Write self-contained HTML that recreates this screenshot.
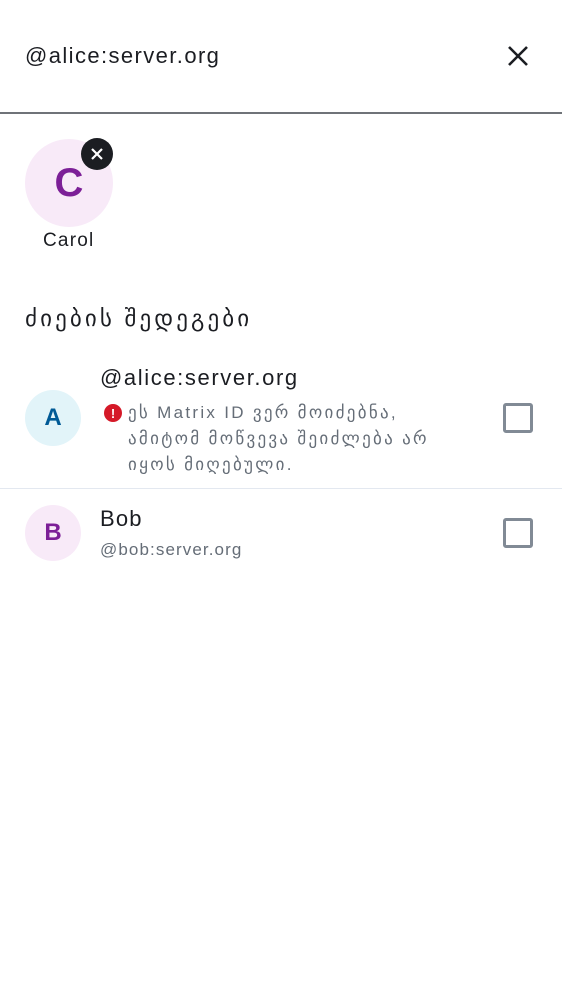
<!DOCTYPE html>
<html><head><meta charset="utf-8"><style>
body{margin:0;width:562px;height:1000px;background:#fff;font-family:"Liberation Sans","DejaVu Sans",sans-serif;color:#1b1d22;position:relative;overflow:hidden}
.a{position:absolute;white-space:nowrap}
.cb{position:absolute;width:24px;height:24px;border:3px solid #818a95;border-radius:3px;left:503px}
.av{position:absolute;border-radius:50%;display:flex;align-items:center;justify-content:center;font-weight:bold}
</style></head><body>
<div class="a" style="left:25px;top:43px;font-size:22px;letter-spacing:1.4px">@alice:server.org</div>
<svg class="a" style="left:507px;top:45px" width="22" height="22" viewBox="0 0 22 22"><path d="M2 2L20 20M20 2L2 20" stroke="#1b1d22" stroke-width="2.6"/></svg>
<div class="a" style="left:0;top:112px;width:562px;height:1.5px;background:#6f7378"></div>
<div class="av" style="left:25px;top:139px;width:88px;height:88px;background:#f8eaf8;color:#7c1f97;font-size:40px">C</div>
<div class="av" style="left:81px;top:138px;width:32px;height:32px;background:#1b1d22"><svg width="14" height="14" viewBox="0 0 14 14"><path d="M2 2L12 12M12 2L2 12" stroke="#fff" stroke-width="2.2"/></svg></div>
<div class="a" style="left:43px;top:230px;font-size:19px;letter-spacing:1.2px;color:#1b1d22">Carol</div>
<div class="a" style="left:25px;top:305px;font-size:23px;letter-spacing:3.1px">ძიების შედეგები</div>
<div class="av" style="left:25px;top:390px;width:56px;height:56px;background:#e2f4f9;color:#005a96;font-size:24px">A</div>
<div class="a" style="left:100px;top:365px;font-size:22px;font-weight:500;letter-spacing:1.6px">@alice:server.org</div>
<div class="av" style="left:104px;top:404px;width:18px;height:18px;background:#d51928;color:#fff;font-size:13px">!</div>
<div class="a" style="left:128px;top:400px;font-size:17px;line-height:26px;letter-spacing:2.3px;color:#656d77">ეს Matrix ID ვერ მოიძებნა,<br>ამიტომ მოწვევა შეიძლება არ<br>იყოს მიღებული.</div>
<div class="cb" style="top:403px"></div>
<div class="a" style="left:0;top:488px;width:562px;height:1px;background:#e3e8f0"></div>
<div class="av" style="left:25px;top:505px;width:56px;height:56px;background:#f8eaf8;color:#7c1f97;font-size:24px">B</div>
<div class="a" style="left:100px;top:506px;font-size:22px;letter-spacing:1.2px">Bob</div>
<div class="a" style="left:100px;top:540px;font-size:17px;letter-spacing:1.1px;color:#656d77">@bob:server.org</div>
<div class="cb" style="top:518px"></div>
</body></html>
